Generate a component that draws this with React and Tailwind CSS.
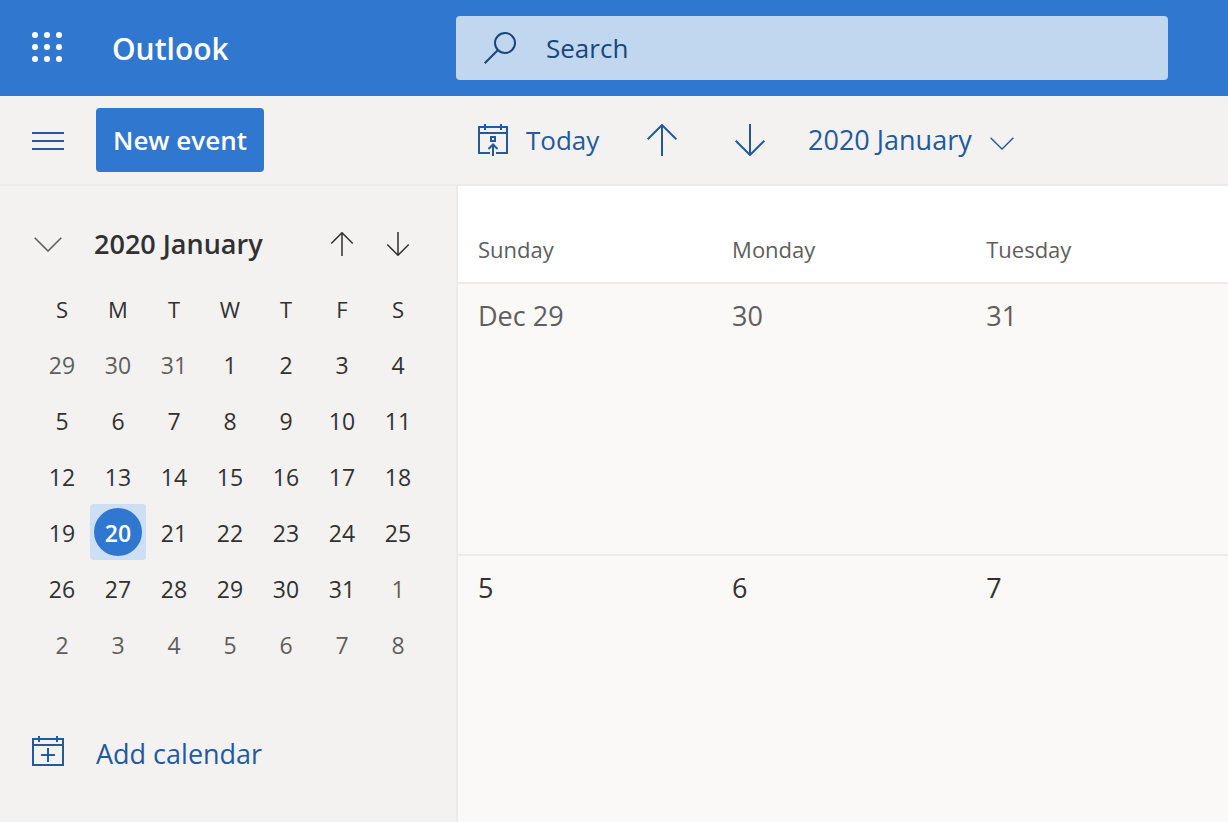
import React from "react";

const DAYS = ["Sunday", "Monday", "Tuesday", "Wednesday", "Thursday", "Friday", "Saturday"];

// mini calendar always shows 6 weeks, starting on Dec 29
const MINI_WEEKS = [
  [29, 30, 31, 1, 2, 3, 4],
  [5, 6, 7, 8, 9, 10, 11],
  [12, 13, 14, 15, 16, 17, 18],
  [19, 20, 21, 22, 23, 24, 25],
  [26, 27, 28, 29, 30, 31, 1],
  [2, 3, 4, 5, 6, 7, 8],
];

const MONTH_DAYS = DAYS.slice(0, 3);
const MONTH_WEEKS = [
  ["Dec 29", "30", "31"],
  ["5", "6", "7"],
];

function isOutside(week, day) {
  return (week === 0 && day > 7) || (week >= 4 && day < 20);
}

function Waffle() {
  return (
    <svg width="32" height="32" viewBox="0 0 32 32" fill="currentColor">
      {[3, 15, 27].map(y => [3, 15, 27].map(x => <circle key={`${x}-${y}`} cx={x} cy={y} r="3" />))}
    </svg>
  );
}

function SearchIcon() {
  return (
    <svg width="32" height="32" viewBox="0 0 32 32" fill="none" stroke="currentColor" strokeWidth="2">
      <circle cx="21" cy="11" r="10" />
      <path d="M14 18 L0.700 31.300" />
    </svg>
  );
}

function TodayIcon() {
  return (
    <svg width="32" height="32" viewBox="0 0 32 32" fill="none" stroke="currentColor" strokeWidth="2">
      <path d="M12 29H1V3H29V29H18M1 9H29M7 0V6M23 0V6" />
      <path d="M13 13H17V17H13ZM15 32V21M10.500 25L15 20.500L19.500 25" />
    </svg>
  );
}

function AddCalendarIcon() {
  return (
    <svg width="32" height="32" viewBox="0 0 32 32" fill="none" stroke="currentColor" strokeWidth="2">
      <path d="M1 3H31V29H1ZM1 9H31M7 0V6M25 0V6M16 12V26M9 19H23" />
    </svg>
  );
}

function Arrow({ down, small }) {
  return (
    <svg
      className={down ? "rotate-180" : ""}
      width={small ? 24 : 32}
      height={small ? 24 : 32}
      viewBox="0 0 32 32"
      fill="none"
      stroke="currentColor"
      strokeWidth="2"
    >
      <path d="M16 32V1.500M1.700 15.300L16 1L30.300 15.300" />
    </svg>
  );
}

function Chevron({ small }) {
  return (
    <svg width={small ? 24 : 28} height={small ? 13 : 15} viewBox="0 0 28 15" fill="none" stroke="currentColor" strokeWidth="1.600">
      <path d="M0.700 0.700L14 14L27.300 0.700" />
    </svg>
  );
}

function Header() {
  return (
    <header className="flex h-24 items-center bg-[#3078cf] text-white">
      <div className="flex w-[456px] shrink-0 items-center gap-12 pl-8">
        <button type="button" aria-label="App launcher"><Waffle /></button>
        <a href="#" className="pt-0.5 text-[30px] leading-10 font-semibold">Outlook</a>
      </div>
      <label className="mr-[60px] flex h-16 flex-1 items-center gap-[30px] rounded bg-[#c1d7ef] pl-7 text-[#1a4678]">
        <SearchIcon />
        <input
          type="search"
          aria-label="Search"
          placeholder="Search"
          className="min-w-0 flex-1 bg-transparent text-[26px] leading-9 outline-none placeholder:text-[#1a4678]"
        />
      </label>
    </header>
  );
}

function Toolbar() {
  return (
    <div className="flex h-[90px] items-center border-b-2 border-[#edebe9] bg-[#f3f2f1] text-[26px] leading-9 text-[#215a9e]">
      <div className="flex w-[478px] shrink-0 items-center gap-8 pl-8">
        <button type="button" aria-label="Toggle sidebar" className="flex w-8 flex-col gap-1.5 pt-0.5">
          <span className="h-0.5 w-8 bg-[#215a9e]" />
          <span className="h-0.5 w-8 bg-[#215a9e]" />
          <span className="h-0.5 w-8 bg-[#215a9e]" />
        </button>
        <button type="button" className="h-16 w-[168px] rounded bg-[#3078cf] font-semibold whitespace-nowrap text-white">
          New event
        </button>
      </div>
      <button type="button" className="flex w-[168px] shrink-0 items-center gap-4">
        <TodayIcon />
        Today
      </button>
      <button type="button" aria-label="Previous month" className="w-[88px] shrink-0"><Arrow /></button>
      <button type="button" aria-label="Next month" className="w-[74px] shrink-0"><Arrow down /></button>
      <button type="button" className="flex shrink-0 items-center gap-[18px] text-[27px]">
        2020 January
        <span className="pt-1.5"><Chevron small /></span>
      </button>
    </div>
  );
}

function MiniCalendar() {
  return (
    <div className="pr-[30px] pl-[34px]">
      <div className="flex h-[94px] items-center pt-[22px] text-[#323130]">
        <button type="button" className="flex flex-1 items-center gap-8 text-[27px] leading-9 font-semibold">
          <span className="text-[#605e5c]"><Chevron /></span>
          2020 January
        </button>
        <button type="button" aria-label="Previous month" className="flex w-14 justify-center"><Arrow small /></button>
        <button type="button" aria-label="Next month" className="flex w-14 justify-center"><Arrow small down /></button>
      </div>
      <table className="w-full table-fixed text-center text-[23px] leading-8 text-[#323130]">
        <thead>
          <tr className="h-14">
            {DAYS.map(d => <th key={d} className="p-0 pt-0.5 text-[22px] font-normal">{d[0]}</th>)}
          </tr>
        </thead>
        <tbody>
          {MINI_WEEKS.map((week, w) => (
            <tr key={w} className="h-14">
              {week.map(day => {
                if (w === 3 && day === 20) {
                  return (
                    <td key={day} className="p-0">
                      <button type="button" className="flex h-14 w-full items-center justify-center rounded bg-[#cde0f3]">
                        <span className="flex size-12 items-center justify-center rounded-full bg-[#3078cf] pt-0.5 font-semibold text-white">
                          {day}
                        </span>
                      </button>
                    </td>
                  );
                }
                return (
                  <td key={day} className="p-0">
                    <button type="button" className={isOutside(w, day) ? "h-14 w-full pt-0.5 text-[#605e5c]" : "h-14 w-full pt-0.5"}>
                      {day}
                    </button>
                  </td>
                );
              })}
            </tr>
          ))}
        </tbody>
      </table>
    </div>
  );
}

function Sidebar() {
  return (
    <aside className="w-[458px] shrink-0 border-r-2 border-[#edebe9] bg-[#f3f2f1]">
      <MiniCalendar />
      <button type="button" className="mt-[60px] ml-8 flex items-center gap-8 text-[27px] leading-9 text-[#215a9e]">
        <AddCalendarIcon />
        <span className="pt-1">Add calendar</span>
      </button>
    </aside>
  );
}

function MonthView() {
  return (
    <main className="min-w-0 flex-1 overflow-hidden bg-[#faf9f8]">
      <table className="w-full table-fixed text-left">
        <thead>
          <tr className="h-[97px] border-b-2 border-[#edebe9] bg-white text-[22px] leading-8 text-[#605e5c]">
            {MONTH_DAYS.map(d => <th key={d} className="w-[33%] p-0 pt-[30px] pl-5 font-normal">{d}</th>)}
            <td />
          </tr>
        </thead>
        <tbody>
          {MONTH_WEEKS.map((week, w) => (
            <tr key={w} className="h-[272px] border-b-2 border-[#edebe9] align-top text-[27px] leading-9 text-[#323130]">
              {week.map(day => (
                <td key={day} className={w === 0 ? "p-0 pt-3.5 pl-5 text-[#605e5c]" : "p-0 pt-3.5 pl-5"}>{day}</td>
              ))}
              <td />
            </tr>
          ))}
        </tbody>
      </table>
    </main>
  );
}

export default function App() {
  return (
    <div className="flex h-screen flex-col overflow-hidden bg-[#f3f2f1] font-['Open_Sans',sans-serif]">
      <Header />
      <Toolbar />
      <div className="flex min-h-0 flex-1">
        <Sidebar />
        <MonthView />
      </div>
    </div>
  );
}
